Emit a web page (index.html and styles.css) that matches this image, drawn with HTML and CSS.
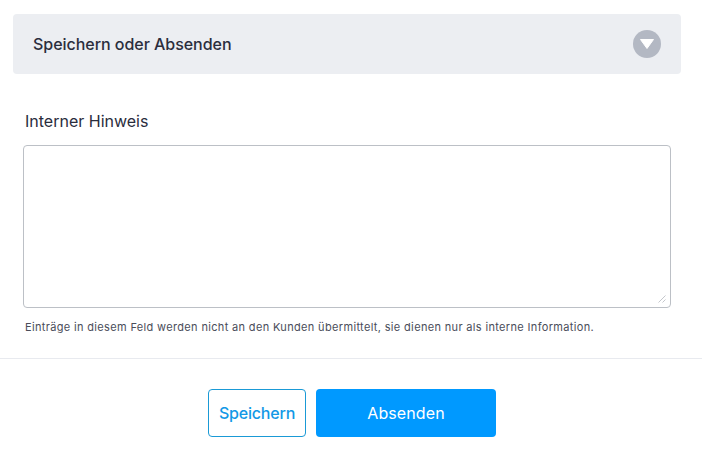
FILE: index.html
```html
<!DOCTYPE html>
<html lang="de">
<head>
<meta charset="utf-8">
<title>Speichern oder Absenden</title>
<link rel="stylesheet" href="styles.css">
</head>
<body>
<main class="page">
  <header class="section-head">
    <h2 class="section-title">Speichern oder Absenden</h2>
    <span class="toggle">
      <svg width="16" height="12" viewBox="0 0 16 12"><path d="M1.5 1.5H14.5L8 10.5Z" fill="#fff" stroke="#fff" stroke-linejoin="round"/></svg>
    </span>
  </header>
  <section class="field">
    <label class="field-label" for="note">Interner Hinweis</label>
    <div class="input-wrap">
      <textarea id="note" class="field-input"></textarea>
      <svg class="grip" width="8" height="8" viewBox="0 0 8 8"><path d="M0.5 7.5L7.5 0.5M4.5 7.5L7.5 4.5" stroke="#c4c7cc" stroke-width="1" fill="none"/></svg>
    </div>
    <p class="field-hint">Einträge in diesem Feld werden nicht an den Kunden übermittelt, sie dienen nur als interne Information.</p>
  </section>
  <footer class="actions">
    <button class="btn btn-outline" type="button">Speichern</button>
    <button class="btn btn-primary" type="button">Absenden</button>
  </footer>
</main>
</body>
</html>
```
FILE: styles.css
```css
* { box-sizing: border-box; }
html, body { margin: 0; height: 100%; background: #fff; }
body { font-family: Inter, "Liberation Sans", sans-serif; overflow: hidden; }
.page { padding-top: 14px; }
.section-head {
  margin: 0 21px 0 13px;
  height: 60px;
  padding: 0 20px;
  display: flex;
  align-items: center;
  justify-content: space-between;
  background: #eceef2;
  border-radius: 4px;
}
.section-title { margin: 0; font-size: 16px; font-weight: 500; letter-spacing: -.04px; color: #2a2d3d; }
.toggle {
  width: 28px; height: 28px; border-radius: 50%;
  background: #b3b8c3;
  display: flex; align-items: center; justify-content: center;
}
.field { padding: 0 31px 0 23px; }
.field-label {
  display: block;
  margin: 37px 0 0 2px;
  height: 34px;
  font-size: 16px; line-height: 20px; font-weight: 400; color: #2a2d3d;
}
.input-wrap { position: relative; width: 648px; height: 163px; }
.field-input {
  display: block;
  width: 100%; height: 100%;
  border: 1px solid #bcc0c6;
  border-radius: 4px;
  background: #fff;
  outline: none;
  resize: none;
}
.grip { position: absolute; right: 5px; bottom: 5px; }
.field-hint {
  margin: 12px 0 0 2px;
  font-size: 11px; line-height: 14px; color: #4a4d5a;
  letter-spacing: .34px;
  white-space: nowrap;
}
.actions {
  margin-top: 24px;
  padding-top: 30px;
  padding-left: 2px;
  border-top: 1px solid #e8eaef;
  display: flex;
  gap: 10px;
  justify-content: center;
}
.btn {
  height: 48px;
  border-radius: 4px;
  font-family: inherit;
  font-size: 16px;
  font-weight: 500;
  padding: 0;
}
.btn-outline { width: 98px; background: #fff; border: 1px solid #1a9ad6; color: #1298e6; letter-spacing: -.2px; }
.btn-primary { width: 180px; background: #0099ff; border: 0; color: #fff; font-weight: 400; letter-spacing: .1px; }
```
